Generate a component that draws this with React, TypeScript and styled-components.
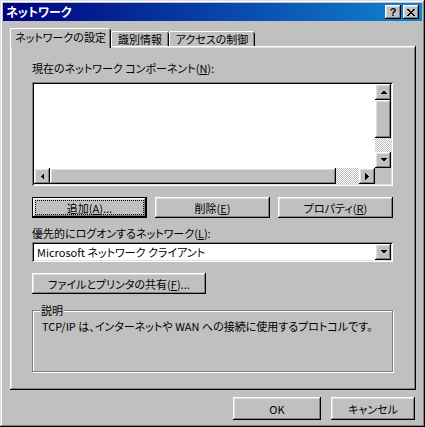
import React from "react";
import styled, { createGlobalStyle, css } from "styled-components";

const Global = createGlobalStyle`
  html, body { margin: 0; padding: 0; background: #c0c0c0; }
  body {
    font-family: "Noto Sans CJK JP", "Noto Sans", sans-serif;
    font-size: 11px;
    color: #000;
  }
  * { box-sizing: border-box; }
`;

const raised = css`
  box-shadow: inset -1px -1px #000, inset 1px 1px #fff, inset -2px -2px #808080,
    inset 2px 2px #dfdfdf;
`;
const sunken = css`
  box-shadow: inset 1px 1px #808080, inset -1px -1px #fff, inset 2px 2px #000,
    inset -2px -2px #dfdfdf;
`;

const Window = styled.div`
  width: 425px;
  height: 427px;
  background: #c0c0c0;
  box-shadow: inset -1px -1px #000, inset 1px 1px #dfdfdf, inset -2px -2px #808080,
    inset 2px 2px #fff;
  padding: 3px;
  display: flex;
  flex-direction: column;
  font-feature-settings: "palt";
  line-height: 14px;
`;

const TitleBar = styled.div`
  height: 18px;
  background: linear-gradient(90deg, #000080, #1084d0);
  display: flex;
  align-items: center;
  padding: 0 3px 0 2px;
  color: #fff;
`;

const Title = styled.span`
  flex: 1;
  font-weight: bold;
  font-size: 12px;
  padding-left: 1px;
`;

const TitleButton = styled.div<{ $gap?: number }>`
  width: 16px;
  height: 14px;
  margin-left: ${(p) => p.$gap ?? 0}px;
  background: #c0c0c0;
  ${raised}
  display: flex;
  align-items: center;
  justify-content: center;
  color: #000;
  font-family: "Liberation Sans", sans-serif;
  font-weight: bold;
  font-size: 11px;
  line-height: 12px;
`;

const Body = styled.div`
  flex: 1;
  display: flex;
  flex-direction: column;
  padding: 7px 6px 0 7px;
`;

const TabStrip = styled.div`
  display: flex;
  align-items: flex-start;
  height: 18px;
  position: relative;
  z-index: 1;
`;

const Tab = styled.div<{ $active?: boolean; $w: number }>`
  width: ${(p) => p.$w}px;
  height: ${(p) => (p.$active ? 20 : 15)}px;
  margin-top: ${(p) => (p.$active ? 0 : 3)}px;
  background: #c0c0c0;
  display: flex;
  align-items: center;
  justify-content: center;
  white-space: nowrap;
  padding-bottom: ${(p) => (p.$active ? 3 : 0)}px;
  border-top-left-radius: 2px;
  border-top-right-radius: 2px;
  box-shadow: inset 1px 0 #fff, inset 0 1px #fff, inset -1px 0 #000,
    inset -2px 0 #808080;
`;

const Panel = styled.div`
  height: 344px;
  background: #c0c0c0;
  ${raised}
  padding: 15px 23px 0 22px;
  display: flex;
  flex-direction: column;
`;

const Label = styled.div<{ $mt?: number }>`
  height: 14px;
  margin-top: ${(p) => p.$mt ?? 0}px;
  white-space: nowrap;
`;

const ListBox = styled.div`
  margin-top: 7px;
  height: 104px;
  ${sunken}
  padding: 2px;
  display: grid;
  grid-template-columns: 1fr 16px;
  grid-template-rows: 1fr 16px;
`;

const ListArea = styled.div`
  background: #fff;
`;

const VScroll = styled.div`
  display: flex;
  flex-direction: column;
`;

const HScroll = styled.div`
  display: flex;
`;

const Corner = styled.div`
  background: #c0c0c0;
`;

const ArrowButton = styled.div<{ $w?: number }>`
  width: ${(p) => p.$w ?? 16}px;
  height: 16px;
  flex: none;
  background: #c0c0c0;
  ${raised}
  display: flex;
  align-items: center;
  justify-content: center;
`;

const Thumb = styled.div<{ $size: number; $vertical?: boolean }>`
  flex: none;
  ${(p) => (p.$vertical ? `height: ${p.$size}px;` : `width: ${p.$size}px;`)}
  background: #c0c0c0;
  ${raised}
`;

const Track = styled.div`
  flex: 1;
  background: repeating-conic-gradient(#c0c0c0 0% 25%, #fff 0% 50%) 0 0 / 2px 2px;
`;

const ButtonRow = styled.div`
  margin-top: 11px;
  display: flex;
  gap: 8px;
`;

const Button = styled.div<{ $w: number; $h?: number; $default?: boolean }>`
  width: ${(p) => p.$w}px;
  height: ${(p) => p.$h ?? 21}px;
  flex: none;
  background: #c0c0c0;
  display: flex;
  align-items: center;
  justify-content: center;
  position: relative;
  white-space: nowrap;
  ${(p) =>
    p.$default
      ? css`
          box-shadow: inset 0 0 0 1px #000, inset -2px -2px #000, inset 2px 2px #fff,
            inset -3px -3px #808080, inset 3px 3px #dfdfdf;
        `
      : raised}
`;

const FocusRing = styled.span`
  position: absolute;
  inset: 4px;
  outline: 1px dotted #000;
`;

const Combo = styled.div`
  margin-top: 2px;
  height: 20px;
  ${sunken}
  padding: 2px;
  display: flex;
  align-items: center;
  background: #fff;
`;

const ComboText = styled.div`
  flex: 1;
  padding-left: 3px;
  white-space: nowrap;
`;

const FileButtonWrap = styled.div`
  margin-top: 11px;
  display: flex;
`;

const GroupBox = styled.div`
  margin-top: 16px;
  height: 62px;
  position: relative;
  border: 1px solid #808080;
  box-shadow: inset 1px 1px #fff, 1px 1px #fff;
  padding: 8px 0 0 9px;
  white-space: nowrap;
`;

const Legend = styled.span`
  position: absolute;
  top: -8px;
  left: 7px;
  padding: 0 1px;
  background: #c0c0c0;
`;

const Footer = styled.div`
  margin-top: 7px;
  display: flex;
  justify-content: flex-end;
  gap: 10px;
  padding-right: 1px;
`;

const ArrowIcon = ({ dir }: { dir: "up" | "down" | "left" | "right" }) => {
  const pts: Record<string, string> = {
    up: "0,4 7,4 3.5,0.5",
    down: "0,0 7,0 3.5,3.5",
    left: "4,0 4,7 0.5,3.5",
    right: "0,0 0,7 3.5,3.5",
  };
  const horiz = dir === "left" || dir === "right";
  return (
    <svg width={horiz ? 4 : 7} height={horiz ? 7 : 4} viewBox={horiz ? "0 0 4 7" : "0 0 7 4"}>
      <polygon points={pts[dir]} fill="#000" shapeRendering="crispEdges" />
    </svg>
  );
};

const CloseIcon = () => (
  <svg width="8" height="7" viewBox="0 0 8 7" shapeRendering="crispEdges">
    <path
      d="M0 0h2v1h-2zM6 0h2v1h-2zM1 1h2v1h-2zM5 1h2v1h-2zM2 2h4v1h-4zM3 3h2v1h-2zM2 4h4v1h-4zM1 5h2v1h-2zM5 5h2v1h-2zM0 6h2v1h-2zM6 6h2v1h-2z"
      fill="#000"
    />
  </svg>
);

export default function App() {
  return (
    <>
      <Global />
      <Window>
        <TitleBar>
          <Title>ネットワーク</Title>
          <TitleButton>?</TitleButton>
          <TitleButton $gap={2}>
            <CloseIcon />
          </TitleButton>
        </TitleBar>
        <Body>
          <TabStrip>
            <Tab $active $w={101}>ネットワークの設定</Tab>
            <Tab $w={58}>識別情報</Tab>
            <Tab $w={86}>アクセスの制御</Tab>
          </TabStrip>
          <Panel>
            <Label>
              現在のネットワーク コンポーネント(<u>N</u>):
            </Label>
            <ListBox>
              <ListArea />
              <VScroll>
                <ArrowButton>
                  <ArrowIcon dir="up" />
                </ArrowButton>
                <Thumb $vertical $size={38} />
                <Track />
                <ArrowButton>
                  <ArrowIcon dir="down" />
                </ArrowButton>
              </VScroll>
              <HScroll>
                <ArrowButton>
                  <ArrowIcon dir="left" />
                </ArrowButton>
                <Thumb $size={286} />
                <Track />
                <ArrowButton>
                  <ArrowIcon dir="right" />
                </ArrowButton>
              </HScroll>
              <Corner />
            </ListBox>
            <ButtonRow>
              <Button $w={115} $default>
                <FocusRing />
                追加(<u>A</u>)...
              </Button>
              <Button $w={115}>
                削除(<u>E</u>)
              </Button>
              <Button $w={115}>
                プロパティ(<u>R</u>)
              </Button>
            </ButtonRow>
            <Label $mt={8}>
              優先的にログオンするネットワーク(<u>L</u>):
            </Label>
            <Combo>
              <ComboText>Microsoft ネットワーク クライアント</ComboText>
              <ArrowButton>
                <ArrowIcon dir="down" />
              </ArrowButton>
            </Combo>
            <FileButtonWrap>
              <Button $w={174}>
                ファイルとプリンタの共有(<u>F</u>)...
              </Button>
            </FileButtonWrap>
            <GroupBox>
              <Legend>説明</Legend>
              TCP/IP は、インターネットや WAN への接続に使用するプロトコルです。
            </GroupBox>
          </Panel>
          <Footer>
            <Button $w={88} $h={23}>
              OK
            </Button>
            <Button $w={84} $h={23}>
              キャンセル
            </Button>
          </Footer>
        </Body>
      </Window>
    </>
  );
}
